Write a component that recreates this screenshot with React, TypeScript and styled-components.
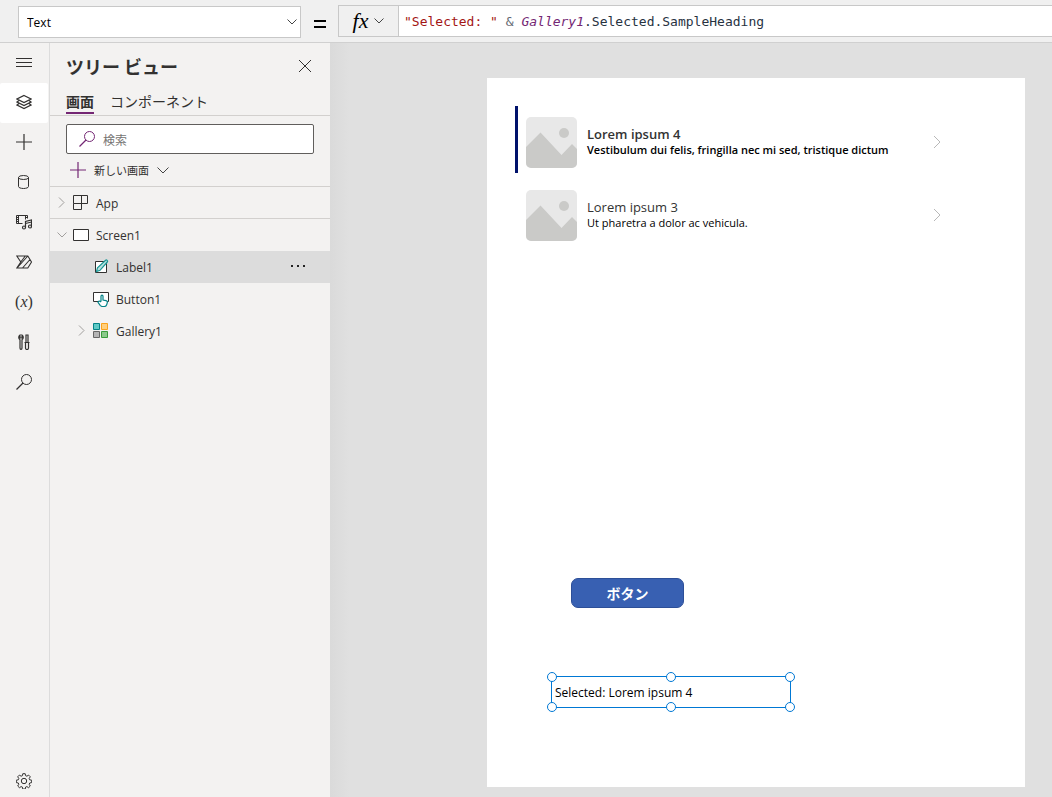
import React from "react";
import styled, { createGlobalStyle } from "styled-components";

const SANS = '"Open Sans", "Noto Sans CJK JP", sans-serif';
const JP = '"Noto Sans CJK JP", sans-serif';

const GlobalStyle = createGlobalStyle`
  *, *::before, *::after { box-sizing: border-box; }
  body { margin: 0; background: #f3f2f1; font-family: ${SANS}; font-size: 12px; color: #323130; }
  button, input, select { font: inherit; color: inherit; }
  button { padding: 0; border: 0; background: none; cursor: pointer; }
  svg { display: block; flex: none; }
`;

const Shell = styled.div`
  display: flex;
  flex-direction: column;
  min-height: 100vh;
`;

const FormulaBar = styled.header`
  display: flex;
  align-items: flex-start;
  height: 43px;
  padding: 5px 0 0 18px;
  background: #f0f0f0;
  border-bottom: 1px solid #d0d0d0;
`;

const PropertyPicker = styled.div`
  display: grid;
  align-items: center;
  width: 283px;
  height: 32px;
  margin-top: 1px;
  background: #fff;
  border: 1px solid #c8c8c8;
  & > * { grid-area: 1 / 1; }
  & > svg { justify-self: end; margin-right: 3px; pointer-events: none; }
`;

const PropertySelect = styled.select`
  appearance: none;
  width: 100%;
  height: 100%;
  padding: 0 24px 0 8px;
  border: 0;
  background: transparent;
  color: #000;
`;

const EqualsSign = styled.span`
  display: flex;
  justify-content: center;
  width: 37px;
  padding-top: 15px;
`;

const FxButton = styled.button`
  display: flex;
  align-items: center;
  justify-content: center;
  gap: 6px;
  width: 61px;
  height: 32px;
  border: 1px solid #c8c8c8;
`;

const FormulaField = styled.div`
  flex: 1;
  min-width: 0;
  height: 32px;
  padding-left: 5px;
  overflow: hidden;
  white-space: pre;
  background: #fff;
  border: solid #c8c8c8;
  border-width: 1px 0;
  font: 13px/32px "DejaVu Sans Mono", monospace;
  color: #27323f;
`;

const TextToken = styled.span` color: #a31515; `;
const OperatorToken = styled.span` color: #5f6670; `;
const ControlToken = styled.span` color: #742774; font-style: italic; `;

const Body = styled.div`
  flex: 1;
  display: flex;
`;

const Rail = styled.nav`
  display: flex;
  flex-direction: column;
  flex: none;
  width: 50px;
  padding-bottom: 3px;
  border-right: 1px solid #dcdcdc;
`;

const RailButton = styled.button<{ $active?: boolean; $last?: boolean }>`
  display: flex;
  align-items: center;
  justify-content: center;
  width: 48px;
  height: ${(p) => (p.$last ? 24 : 40)}px;
  margin-top: ${(p) => (p.$last ? "auto" : 0)};
  padding-bottom: 2px;
  border-radius: 2px;
  background: ${(p) => (p.$active ? "#fff" : "transparent")};
`;

const Panel = styled.aside`
  flex: none;
  width: 280px;
`;

const PanelHeader = styled.div`
  display: flex;
  align-items: center;
  justify-content: space-between;
  height: 47px;
  padding: 0 18px 2px 16px;
`;

const PanelTitle = styled.h2`
  margin: 0;
  font: 700 18px/24px ${JP};
`;

const Tabs = styled.div`
  display: flex;
  gap: 16px;
  height: 26px;
  padding: 0 16px;
  border-bottom: 1px solid #d2d0ce;
`;

const Tab = styled.button<{ $active?: boolean }>`
  height: 24px;
  border-bottom: 2px solid ${(p) => (p.$active ? "#742774" : "transparent")};
  font: ${(p) => (p.$active ? 700 : 400)} 14px/20px ${JP};
`;

const SearchBox = styled.label`
  display: flex;
  align-items: center;
  gap: 8px;
  height: 30px;
  margin: 8px 16px 0;
  padding-left: 12px;
  background: #fff;
  border: 1px solid #605e5c;
  border-radius: 2px;
`;

const SearchInput = styled.input`
  flex: 1;
  min-width: 0;
  height: 28px;
  padding: 0;
  border: 0;
  outline: 0;
  background: transparent;
  font: 12px ${JP};
  &::placeholder { color: #767472; opacity: 1; }
`;

const NewScreenButton = styled.button`
  display: flex;
  align-items: center;
  gap: 8px;
  height: 32px;
  padding-left: 20px;
  font: 11px/16px ${JP};
`;

const Tree = styled.ul`
  margin: 0;
  padding: 0;
  list-style: none;
  border-top: 1px solid #d2d0ce;
`;

const TreeRow = styled.li<{ $level?: number; $selected?: boolean; $ruled?: boolean }>`
  display: flex;
  align-items: center;
  height: 32px;
  padding: 0 24px 0 ${(p) => 6 + (p.$level ?? 0) * 20}px;
  border-bottom: ${(p) => (p.$ruled ? "1px solid #d2d0ce" : "0")};
  background: ${(p) => (p.$selected ? "#dcdcdc" : "transparent")};
`;

const Twisty = styled.button`
  display: flex;
  align-items: center;
  justify-content: center;
  width: 12px;
  height: 16px;
  margin-right: 5px;
`;

const TreeLabel = styled.span`
  flex: 1;
  margin-left: 7px;
  padding-top: 2px;
  line-height: 16px;
`;

const Stage = styled.main`
  flex: 1;
  display: flex;
  min-width: 0;
  padding: 35px 27px 10px 157px;
  background: linear-gradient(90deg, #dadada, #e0e0e0 20px);
`;

const Screen = styled.section`
  position: relative;
  flex: 1;
  min-width: 0;
  min-height: 709px;
  background: #fff;
`;

const Gallery = styled.ul`
  position: absolute;
  left: 28px;
  top: 28px;
  width: 440px;
  margin: 0;
  padding: 0;
  list-style: none;
`;

const GalleryItem = styled.li<{ $selected?: boolean }>`
  display: flex;
  align-items: center;
  height: 67px;
  margin-bottom: 6px;
  padding: 6px 14px 0 8px;
  border-left: 3px solid ${(p) => (p.$selected ? "#00126b" : "transparent")};
  color: #000;
  font-weight: ${(p) => (p.$selected ? 600 : 400)};
`;

const ItemText = styled.div`
  flex: 1;
  margin-left: 10px;
  padding-bottom: 2px;
`;

const ItemTitle = styled.div`
  font-size: 13px;
  line-height: 16px;
  color: #333;
`;

const ItemSubtitle = styled.div`
  font-size: 11px;
  line-height: 16px;
`;

const CanvasButton = styled.button`
  position: absolute;
  left: 84px;
  top: 500px;
  width: 113px;
  height: 30px;
  border: 1px solid #2d4f98;
  border-radius: 7px;
  background: #3860b2;
  color: #fff;
  font: 700 14px/20px ${JP};
`;

const SelectedLabel = styled.div`
  position: absolute;
  left: 64px;
  top: 598px;
  width: 240px;
  height: 32px;
  padding-left: 3px;
  border: 1px solid #0078d4;
  color: #000;
  line-height: 32px;
`;

const Handle = styled.span<{ $x: number; $y: number }>`
  position: absolute;
  left: ${(p) => p.$x}%;
  top: ${(p) => p.$y}%;
  width: 10px;
  height: 10px;
  margin: -5px;
  border: 1px solid #0078d4;
  border-radius: 50%;
  background: #fff;
`;

type IconProps = { w?: number; h?: number; color?: string; children: React.ReactNode };
const Icon = ({ w = 16, h = 16, color = "#323130", children }: IconProps) => (
  <svg width={w} height={h} viewBox={`0 0 ${w} ${h}`} fill="none" stroke={color} aria-hidden="true">
    {children}
  </svg>
);

const ChevronDown = ({ w = 10, color = "#444" }: { w?: number; color?: string }) => (
  <Icon w={w} h={8} color={color}><path d={`M.5 1.5 ${w / 2} ${w / 2 + 1} ${w - 0.5} 1.5`} /></Icon>
);
const ChevronRight = () => (
  <Icon w={8} h={12} color="#a19f9d"><path d="M1 .5 6 5.500 1 10.500" /></Icon>
);
const Magnifier = ({ color }: { color?: string }) => (
  <Icon color={color}><circle cx="10.5" cy="5.5" r="5" /><path d="M7 9 .5 15.5" strokeWidth="1.2" /></Icon>
);
const Plus = ({ color }: { color?: string }) => (
  <Icon color={color}><path d="M8 0v16M0 8h16" strokeWidth="1.2" /></Icon>
);

const MenuIcon = () => <Icon><path d="M0 4.500h16M0 8.500h16M0 12.500h16" /></Icon>;
const LayersIcon = () => (
  <Icon>
    <path d="M8 1.500 15 5 8 8.500 1 5Z" strokeWidth="1.2" />
    <path d="M3 6.500 1 8l7 3.500L15 8l-2-1.500M3 9.500 1 11l7 3.500 7-3.500-2-1.500" strokeWidth="1.2" />
  </Icon>
);
const DataIcon = () => (
  <Icon>
    <ellipse cx="7.5" cy="3.5" rx="5" ry="2" />
    <path d="M2.5 3.5v9c0 1.1 2.2 2 5 2s5-.9 5-2v-9" />
  </Icon>
);
const MediaIcon = () => (
  <Icon>
    <path d="M6.500 9.500H.5v-8h11v3M2.500 1.500v8M9.500 1.500v4" />
    <path d="M1 3.500h1M1 5.500h1M1 7.500h1M10 3.500h1" />
    <path d="M9.500 13.500V7.500l6-1.500v6.500M9.500 9.500l6-1.500" strokeWidth="1.2" />
    <circle cx="8" cy="13.5" r="1.5" strokeWidth="1.2" />
    <circle cx="14" cy="12.5" r="1.5" strokeWidth="1.2" />
  </Icon>
);
const FlowIcon = () => (
  <Icon>
    <path d="M.8 2h11L15.500 8l-3.700 6H.8l4-6ZM4.800 8l4.500-6M1.500 13.500 11.800 2M6.500 14l7.500-8.500" strokeWidth="1.1" />
  </Icon>
);
const ToolsIcon = () => (
  <Icon>
    <path d="M4 1v3h2V1c1.700.9 1.700 3.800 0 4.800V14c0 1.700-2 1.700-2 0V5.800C2.300 4.800 2.300 1.900 4 1Z" strokeWidth="1.2" />
    <path d="M10 1h2v7.500h-2ZM8.500 8.500h5M9.500 9v5c0 2 3 2 3 0V9" strokeWidth="1.2" />
  </Icon>
);
const GearIcon = () => (
  <Icon>
    <path d="M6.800.7h2.400l.4 2 1.300.5 1.700-1.100 1.700 1.700-1.100 1.700.5 1.300 2 .4v2.400l-2 .4-.5 1.300 1.100 1.700-1.700 1.700-1.700-1.100-1.300.5-.4 2H6.800l-.4-2-1.300-.5-1.700 1.100L1.700 13l1.100-1.700-.5-1.300-2-.4V7.200l2-.4.5-1.300-1.100-1.700 1.700-1.700 1.700 1.100 1.300-.5Z" />
    <circle cx="8" cy="8" r="2.700" />
  </Icon>
);
const VariableGlyph = styled.span`
  font: 16px/20px "Liberation Serif", serif;
  white-space: nowrap;
`;
const FxGlyph = styled.span`
  font: italic 22px/26px "Liberation Serif", serif;
  color: #000;
`;

const CloseIcon = () => <Icon w={14} h={14}><path d="m1 1 12 12M13 1 1 13" /></Icon>;
const AppIcon = () => <Icon><path d="M.5.5h14v8h-14ZM8.500.5v8M.5 8.500v6h8v-6" /></Icon>;
const ScreenIcon = () => <Icon><path d="M.5 2.500h15v11H.5Z" fill="#fff" /></Icon>;
const LabelIcon = () => (
  <Icon>
    <path d="M2.500 2.500h11v11h-11Z" fill="#fff" />
    <path d="m3.500 12.500 1-3.800L12.600 1.200c1-.8 2.600.6 1.700 1.800L7 11.300Z" stroke="#1a9694" fill="#b8e2e0" strokeWidth="1.200" />
  </Icon>
);
const ButtonIcon = () => (
  <Icon>
    <path d="M5 10.500H.5v-9h15v9H14" fill="#fff" />
    <path d="M8 10.500V5.200c0-1.400 2-1.400 2 0V9l3 .6c1.100.3 1.500 1 1.300 2l-.5 1.800c-.4 1.500-1.300 2.100-2.500 2.100H9.500c-1 0-1.700-.5-2.300-1.200L5 11.300c.2-1.400 2-1.500 3-.3" stroke="#038387" fill="#fff" strokeWidth="1.200" />
  </Icon>
);
const GalleryIcon = () => (
  <Icon>
    <path d="M.5.5h6v6h-6Z" fill="#5fc9c5" stroke="#038387" />
    <path d="M8.500.5h6v6h-6Z" fill="#ffcf7d" stroke="#faa21b" />
    <path d="M.5 8.500h6v6h-6Z" fill="#b5b5b5" stroke="#666" />
    <path d="M8.500 8.500h6v6h-6Z" fill="#8cc98c" stroke="#3a9b3c" />
  </Icon>
);
const MoreIcon = () => (
  <Icon w={16} h={4}><path d="M1 0h2v2H1ZM7 0h2v2H7ZM13 0h2v2h-2Z" fill="#222" stroke="none" /></Icon>
);
const SamplePicture = () => (
  <svg width="51" height="51" viewBox="0 0 51 51" aria-hidden="true">
    <rect width="51" height="51" rx="5" fill="#e8e8e8" />
    <path d="M0 30 14.500 15.500 35.500 38 46 27l5 5v14a5 5 0 0 1-5 5H5a5 5 0 0 1-5-5Z" fill="#cacac8" />
    <circle cx="38" cy="16" r="5" fill="#cacac8" />
  </svg>
);

const railItems = [
  { name: "メニュー", icon: <MenuIcon /> },
  { name: "ツリー ビュー", icon: <LayersIcon />, active: true },
  { name: "挿入", icon: <Plus /> },
  { name: "データ", icon: <DataIcon /> },
  { name: "メディア", icon: <MediaIcon /> },
  { name: "Power Automate", icon: <FlowIcon /> },
  { name: "変数", icon: <VariableGlyph>(<i>x</i>)</VariableGlyph> },
  { name: "詳細ツール", icon: <ToolsIcon /> },
  { name: "検索", icon: <Magnifier /> },
];

const galleryItems = [
  { title: "Lorem ipsum 4", subtitle: "Vestibulum dui felis, fringilla nec mi sed, tristique dictum", selected: true },
  { title: "Lorem ipsum 3", subtitle: "Ut pharetra a dolor ac vehicula.", selected: false },
];

const handles = [[0, 0], [50, 0], [100, 0], [0, 100], [50, 100], [100, 100]];

export default function App() {
  return (
    <Shell>
      <GlobalStyle />
      <FormulaBar>
        <PropertyPicker>
          <PropertySelect aria-label="プロパティ" defaultValue="Text">
            <option>Text</option>
          </PropertySelect>
          <ChevronDown />
        </PropertyPicker>
        <EqualsSign>
          <Icon w={12} h={8} color="#000"><path d="M0 1h12M0 7h12" strokeWidth="2" /></Icon>
        </EqualsSign>
        <FxButton aria-label="関数">
          <FxGlyph>fx</FxGlyph>
          <ChevronDown />
        </FxButton>
        <FormulaField role="textbox" aria-label="数式" contentEditable suppressContentEditableWarning spellCheck={false}>
          <TextToken>"Selected: "</TextToken> <OperatorToken>&amp;</OperatorToken>{" "}
          <ControlToken>Gallery1</ControlToken>.Selected.SampleHeading
        </FormulaField>
      </FormulaBar>
      <Body>
        <Rail>
          {railItems.map((item) => (
            <RailButton key={item.name} $active={item.active} aria-label={item.name}>{item.icon}</RailButton>
          ))}
          <RailButton $last aria-label="設定"><GearIcon /></RailButton>
        </Rail>
        <Panel>
          <PanelHeader>
            <PanelTitle>ツリー ビュー</PanelTitle>
            <button aria-label="閉じる"><CloseIcon /></button>
          </PanelHeader>
          <Tabs role="tablist">
            <Tab role="tab" aria-selected="true" $active>画面</Tab>
            <Tab role="tab" aria-selected="false">コンポーネント</Tab>
          </Tabs>
          <SearchBox>
            <Magnifier color="#742774" />
            <SearchInput type="text" placeholder="検索" aria-label="検索" />
          </SearchBox>
          <NewScreenButton>
            <Plus color="#742774" />
            新しい画面
            <ChevronDown w={12} />
          </NewScreenButton>
          <Tree>
            <TreeRow $ruled>
              <Twisty aria-label="展開"><ChevronRight /></Twisty>
              <AppIcon /><TreeLabel>App</TreeLabel>
            </TreeRow>
            <TreeRow>
              <Twisty aria-label="折りたたむ"><ChevronDown color="#a19f9d" /></Twisty>
              <ScreenIcon /><TreeLabel>Screen1</TreeLabel>
            </TreeRow>
            <TreeRow $level={1} $selected>
              <Twisty as="span" />
              <LabelIcon /><TreeLabel>Label1</TreeLabel>
              <button aria-label="その他"><MoreIcon /></button>
            </TreeRow>
            <TreeRow $level={1}>
              <Twisty as="span" />
              <ButtonIcon /><TreeLabel>Button1</TreeLabel>
            </TreeRow>
            <TreeRow $level={1}>
              <Twisty aria-label="展開"><ChevronRight /></Twisty>
              <GalleryIcon /><TreeLabel>Gallery1</TreeLabel>
            </TreeRow>
          </Tree>
        </Panel>
        <Stage>
          <Screen>
            <Gallery>
              {galleryItems.map((item) => (
                <GalleryItem key={item.title} $selected={item.selected}>
                  <SamplePicture />
                  <ItemText>
                    <ItemTitle>{item.title}</ItemTitle>
                    <ItemSubtitle>{item.subtitle}</ItemSubtitle>
                  </ItemText>
                  <Icon w={8} h={16} color="#b8b8b8"><path d="m1 1 6 6-6 6" /></Icon>
                </GalleryItem>
              ))}
            </Gallery>
            <CanvasButton>ボタン</CanvasButton>
            <SelectedLabel>
              Selected: Lorem ipsum 4
              {handles.map(([x, y]) => <Handle key={`${x}-${y}`} $x={x} $y={y} />)}
            </SelectedLabel>
          </Screen>
        </Stage>
      </Body>
    </Shell>
  );
}
